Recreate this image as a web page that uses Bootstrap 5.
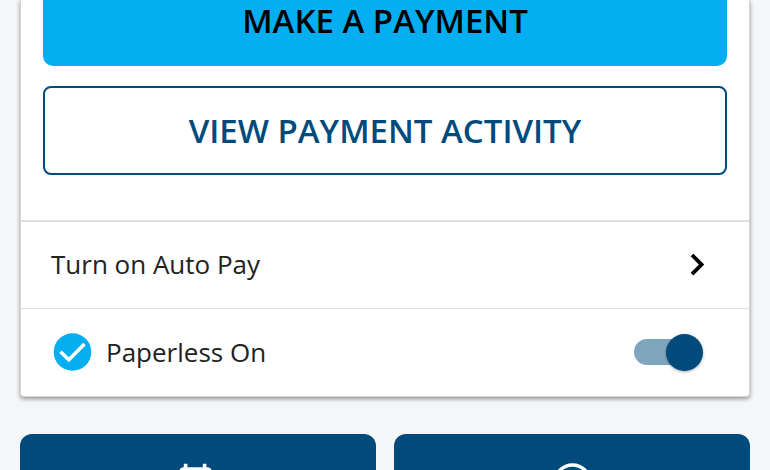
<!DOCTYPE html>
<html lang="en">
<head>
<meta charset="utf-8">
<meta name="viewport" content="width=device-width, initial-scale=1">
<title>Billing</title>
<link href="https://cdn.jsdelivr.net/npm/bootstrap@5.3.0/dist/css/bootstrap.min.css" rel="stylesheet">
<style>
  :root { --navy: #004b7c; --sky: #05adf1; }
  body { background: #f5f6f8; font-family: "Open Sans", sans-serif; color: #222; }
  .page { padding: 0 20px 20px; }
  .bill-card { border: 1px solid #d4d5d6; border-top: 0; border-radius: 0 0 4px 4px; box-shadow: 0 2px 4px rgba(0,0,0,.4); }
  .bill-actions { padding: 0 22px 45px; gap: 20px; }
  .btn-bill { font-size: 33px; font-weight: 600; line-height: 45px; border-radius: 8px; padding: 20px; }
  .btn-pay, .btn-pay:hover { background: var(--sky); color: #000; border: 0; border-radius: 0 0 10px 10px; padding: 0 20px 25px; line-height: 41px; }
  .btn-activity, .btn-activity:hover { background: #fff; color: var(--navy); border: 2px solid var(--navy); }
  .bill-row { border-top: 2px solid #dfe0e1; font-size: 26px; line-height: 36px; padding: 24px 44px 26px 30px; color: #222; }
  .bill-row + .bill-row { border-top-width: 1px; }
  .bill-row.paperless { gap: 14px; padding: 24px 46px 25px 32px; }
  .switch { appearance: none; width: 69px; height: 38px; margin: 0; display: grid; align-items: center; cursor: pointer; }
  .switch::before, .switch::after { content: ""; grid-area: 1 / 1; }
  .switch::before { width: 58px; height: 26px; border-radius: 13px; background: #80a6be; }
  .switch::after { width: 37px; height: 37px; border-radius: 50%; background: var(--navy); box-shadow: 0 1px 3px rgba(0,0,0,.35); }
  .switch:checked::after { justify-self: end; }
  .tiles { gap: 18px; margin-top: 37px; }
  .tile { background: var(--navy); border-radius: 12px; min-height: 120px; padding-top: 28px; }
</style>
<script src="https://cdn.jsdelivr.net/npm/bootstrap@5.3.0/dist/js/bootstrap.bundle.min.js"></script>
</head>
<body>
<main class="page">
  <section class="bill-card bg-white">
    <div class="bill-actions d-grid">
      <button type="button" class="btn btn-bill btn-pay">MAKE A PAYMENT</button>
      <button type="button" class="btn btn-bill btn-activity">VIEW PAYMENT ACTIVITY</button>
    </div>
    <a href="#autopay" class="bill-row d-flex align-items-center justify-content-between text-decoration-none">
      <span>Turn on Auto Pay</span>
      <svg width="16" height="24" viewBox="0 0 16 24" fill="none" stroke="#000" stroke-width="3.8" aria-hidden="true"><path d="M3 3 12.6 12.6 3 22.2"/></svg>
    </a>
    <div class="bill-row paperless d-flex align-items-center">
      <svg width="39" height="38" viewBox="0 0 39 38" aria-hidden="true"><circle cx="19.5" cy="19" r="18.8" fill="#05adf1"/><path d="M7.5 18.8 15.8 26.8 31.5 11" fill="none" stroke="#fff" stroke-width="3.6"/></svg>
      <label for="paperless" class="flex-grow-1">Paperless On</label>
      <input type="checkbox" role="switch" id="paperless" class="switch flex-shrink-0" checked>
    </div>
  </section>
  <nav class="tiles d-flex" aria-label="Shortcuts">
    <a href="#schedule" class="tile flex-fill d-flex align-items-start justify-content-center" aria-label="Schedule">
      <svg width="40" height="44" viewBox="0 0 40 44" fill="none" stroke="#fff" stroke-width="3.6" aria-hidden="true"><path d="M7.6 1.7v9M26.6 1.7v9"/><rect x="2.8" y="7" width="29.4" height="30" rx="3"/><path d="M3 16h29"/></svg>
    </a>
    <a href="#history" class="tile flex-fill d-flex align-items-start justify-content-center" aria-label="History">
      <svg width="40" height="44" viewBox="0 0 40 44" fill="none" stroke="#fff" stroke-width="3.6" aria-hidden="true"><circle cx="20.5" cy="20.6" r="17.6"/><path d="M20.5 11v11l7 4"/></svg>
    </a>
  </nav>
</main>
</body>
</html>
